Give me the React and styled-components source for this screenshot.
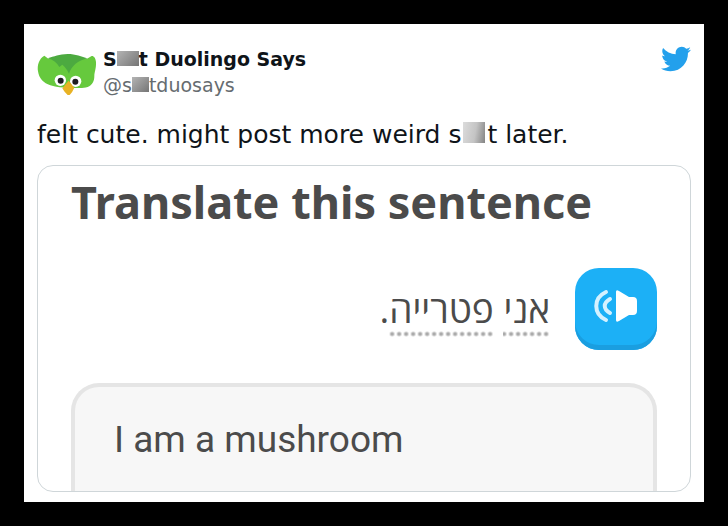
import React, { useState } from 'react';
import styled, { createGlobalStyle } from 'styled-components';
import { FaTwitter } from 'react-icons/fa';

const GlobalStyle = createGlobalStyle`
  * {
    box-sizing: border-box;
  }

  body {
    margin: 0;
    background: #000;
    color: #0f1419;
    font-family: 'DejaVu Sans', sans-serif;
  }
`;

const Page = styled.main`
  padding: 24px;
`;

const Tweet = styled.article`
  padding: 20px 13px 10px;
  background: #fff;
`;

const Header = styled.header`
  display: flex;
  align-items: flex-start;
  gap: 6px;
`;

const Avatar = styled.svg`
  width: 60px;
  height: 44px;
  margin-top: 8px;
  flex-shrink: 0;
`;

const Author = styled.div`
  flex: 1;
  display: flex;
  flex-direction: column;
  padding-top: 2px;
`;

const Name = styled.strong`
  font-size: 19px;
  line-height: 26px;
`;

const Handle = styled.a`
  color: #666c70;
  font-size: 19px;
  line-height: 26px;
  text-decoration: none;
`;

const HomeLink = styled.a`
  color: #23a0ec;
  line-height: 0;
`;

const Censor = styled.span`
  display: inline-block;
  width: ${(props) => (props.$size === 'small' ? '17px' : '22px')};
  height: ${(props) => (props.$size === 'large' ? '21px' : '15px')};
  margin: 0 ${(props) => (props.$size === 'large' ? '2px' : '0')};
  vertical-align: baseline;
  background: ${(props) =>
    props.$size === 'large'
      ? 'linear-gradient(100deg, #dcdcdc, #c4c4c4 55%, #848484)'
      : 'linear-gradient(135deg, #b4b4b4, #757575)'};
`;

const Message = styled.p`
  margin: 20px 0 13px;
  font-size: 25px;
  line-height: 34px;
`;

const Exercise = styled.section`
  overflow: hidden;
  padding: 9px 33px 0;
  border: 1px solid #cfd6d9;
  border-radius: 16px;
  color: #4b4b4b;
`;

const Title = styled.h1`
  margin: 0;
  font-family: 'Noto Sans', sans-serif;
  font-size: 45px;
  font-weight: 700;
  line-height: 54px;
`;

const Prompt = styled.div`
  display: flex;
  align-items: center;
  justify-content: flex-end;
  gap: 25px;
  margin: 39px 0 33px;
`;

const Sentence = styled.p`
  margin: 0;
  padding-top: 8px;
  font-family: 'Open Sans', 'DejaVu Sans', sans-serif;
  font-size: 37px;
  line-height: 40px;
`;

const Word = styled.span`
  display: inline-block;
  padding-bottom: 8px;
  background: radial-gradient(circle, #a8a8a8 1px, transparent 3px) bottom right / 7px 6px repeat-x;
`;

const SpeakerButton = styled.button`
  display: flex;
  align-items: center;
  justify-content: center;
  width: 82px;
  height: 82px;
  padding: 0 0 6px;
  border: none;
  border-radius: 24px;
  background: #1cb0f6;
  box-shadow: inset 0 -5px 0 #1a9ee0;
  cursor: pointer;
`;

const Answer = styled.textarea`
  display: block;
  width: 100%;
  height: 108px;
  padding: 29px 39px 0;
  overflow: hidden;
  border: 4px solid #e5e5e5;
  border-bottom: none;
  border-radius: 28px 28px 0 0;
  outline: none;
  resize: none;
  background: #f7f7f7;
  color: #4b4b4b;
  font-family: Roboto, sans-serif;
  font-size: 37px;
  line-height: 48px;
`;

const OwlAvatar = () => (
  <Avatar viewBox='0 0 180 132' role='img' aria-label='Green owl'>
    <path
      d='M22 11 C6 20 0 40 3 58 C6 80 20 94 40 100 C60 106 75 107 95 107 C115 107 135 111 152 105 C166 99 172 88 172 72 C172 60 178 50 177 30 C176 18 170 11 164 12 L150 20 L34 20 Z'
      fill='#66c93d'
    />
    <path d='M32 19 C52 13 66 7 92 6 C116 6 134 14 152 19 C122 25 104 42 96 65 C90 52 84 44 76 38 L67 45 C60 32 48 23 32 19 Z' fill='#4caa40' />
    <circle cx='70' cy='85' r='17' fill='#fff' />
    <circle cx='116' cy='88' r='17' fill='#fff' />
    <circle cx='71' cy='86' r='9' fill='#1d1d20' />
    <circle cx='115' cy='89' r='9' fill='#1d1d20' />
    <path d='M95 86 L112 107 Q106 121 98 129 L92 129 Q83 122 76 109 Z' fill='#e8b224' />
  </Avatar>
);

const SpeakerIcon = () => (
  <svg width='44' height='34' viewBox='0 0 44 34' fill='none' aria-hidden='true'>
    <path d='M22 3 Q22 0 25 2 L35 8 H39 Q43 8 43 12 V22 Q43 26 39 26 H35 L25 32 Q22 34 22 31 Z' fill='#fff' />
    <path d='M12 3 C-1 9 -1 25 12 31' stroke='#d4f1ff' strokeWidth='4' strokeLinecap='round' />
    <path d='M16 10 C9 14 9 20 16 24' stroke='#d4f1ff' strokeWidth='4' strokeLinecap='round' />
  </svg>
);

const App = () => {
  const [answer, setAnswer] = useState('I am a mushroom');

  return (
    <Page>
      <GlobalStyle />
      <Tweet>
        <Header>
          <OwlAvatar />
          <Author>
            <Name>
              S<Censor />t Duolingo Says
            </Name>
            <Handle href='#profile'>
              @s<Censor $size='small' />tduosays
            </Handle>
          </Author>
          <HomeLink href='#home' aria-label='Twitter'>
            <FaTwitter size={30} />
          </HomeLink>
        </Header>
        <Message>
          felt cute. might post more weird s<Censor $size='large' />t later.
        </Message>
        <Exercise>
          <Title>Translate this sentence</Title>
          <Prompt>
            <Sentence lang='he' dir='rtl'>
              <Word>אני</Word> <Word>פטרייה</Word>.
            </Sentence>
            <SpeakerButton type='button' aria-label='Play sentence'>
              <SpeakerIcon />
            </SpeakerButton>
          </Prompt>
          <Answer
            aria-label='Your translation'
            spellCheck={false}
            value={answer}
            onChange={(e) => setAnswer(e.target.value)}
          />
        </Exercise>
      </Tweet>
    </Page>
  );
};

export default App;
